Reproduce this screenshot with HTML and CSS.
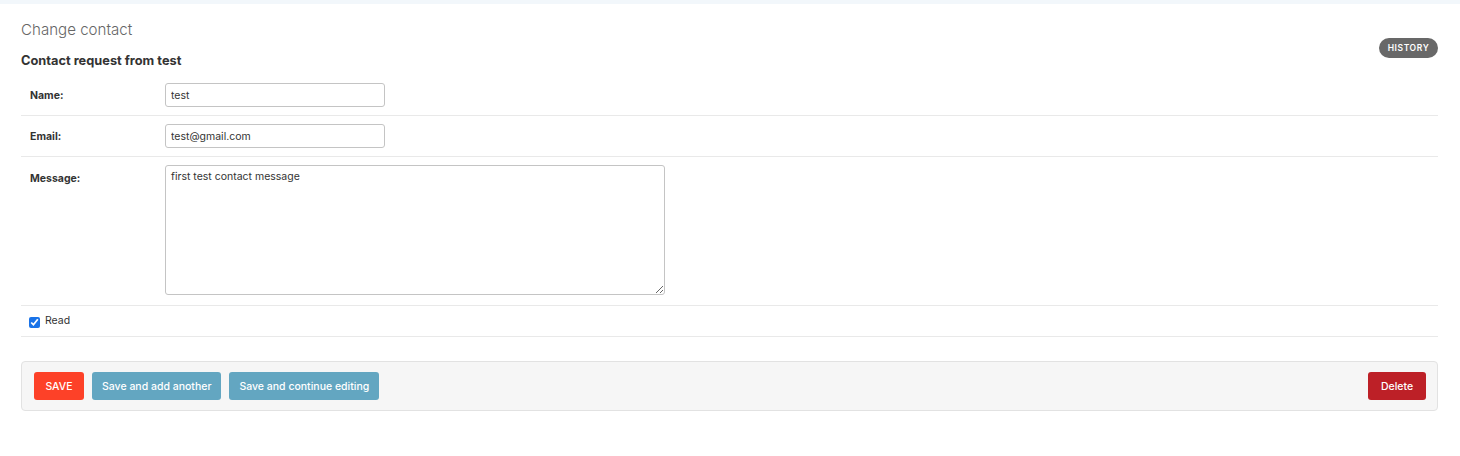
FILE: index.html
```html
<!DOCTYPE html>
<html lang="en">
<head>
<meta charset="utf-8">
<title>Change contact</title>
<link rel="stylesheet" href="styles.css">
</head>
<body>
<div class="topstrip"></div>
<div class="content">
  <div class="header">
    <div class="titles">
      <h1 class="page-title">Change contact</h1>
      <h2 class="object-title">Contact request from test</h2>
    </div>
    <a class="history-link" href="#">History</a>
  </div>
  <form class="change-form">
    <div class="form-row">
      <label class="field-label" for="id_name">Name:</label>
      <input class="text-input" id="id_name" type="text" value="test">
    </div>
    <div class="form-row">
      <label class="field-label" for="id_email">Email:</label>
      <input class="text-input" id="id_email" type="text" value="test@gmail.com">
    </div>
    <div class="form-row">
      <label class="field-label label-top" for="id_message">Message:</label>
      <textarea class="text-area" id="id_message">first test contact message</textarea>
    </div>
    <div class="form-row checkbox-row">
      <input class="check" id="id_read" type="checkbox" checked>
      <label class="check-label" for="id_read">Read</label>
    </div>
    <div class="submit-row">
      <div class="submit-left">
        <button type="button" class="btn btn-save">SAVE</button>
        <button type="button" class="btn btn-alt">Save and add another</button>
        <button type="button" class="btn btn-alt">Save and continue editing</button>
      </div>
      <button type="button" class="btn btn-delete">Delete</button>
    </div>
  </form>
</div>
</body>
</html>
```
FILE: styles.css
```css
html, body {
  margin: 0;
  padding: 0;
  background: #fff;
  font-family: "Inter", "Noto Sans", sans-serif;
  color: #333;
}
.topstrip {
  height: 4px;
  background: #f2f7fb;
}
.content {
  padding: 15px 22px 0 21px;
}
.header {
  display: flex;
  justify-content: space-between;
  align-items: flex-start;
}
.page-title {
  margin: 0;
  font-size: 15.1px;
  line-height: 22px;
  font-weight: 300;
  color: #666;
}
.object-title {
  margin: 12px 0 0 0;
  font-size: 12.8px;
  line-height: 16px;
  font-weight: 700;
  color: #333;
}
.history-link {
  margin-top: 19px;
  display: inline-flex;
  align-items: center;
  justify-content: center;
  width: 59px;
  height: 20px;
  border-radius: 10px;
  background: #686868;
  color: #fff;
  font-size: 8.5px;
  font-weight: 600;
  letter-spacing: 0.6px;
  text-transform: uppercase;
  text-decoration: none;
}
.change-form {
  margin-top: 6px;
}
.form-row {
  display: flex;
  align-items: flex-start;
  padding: 8px 9px;
  border-bottom: 1px solid #e9e9e9;
}
.field-label {
  width: 135px;
  height: 24px;
  flex: none;
  font-size: 10.5px;
  font-weight: 700;
  color: #333;
  line-height: 26px;
}
.label-top {
  line-height: 14px;
  padding-top: 7px;
}
.text-input {
  box-sizing: border-box;
  width: 220px;
  height: 24px;
  margin: 0;
  padding: 0 5px;
  border: 1px solid #c4c4c4;
  border-radius: 3px;
  font-family: inherit;
  font-size: 10.5px;
  color: #333;
}
.text-area {
  box-sizing: border-box;
  display: block;
  width: 500px;
  height: 130px;
  margin: 0 0 2px 0;
  padding: 4px 5px;
  border: 1px solid #c4c4c4;
  border-radius: 3px;
  font-family: inherit;
  font-size: 10.5px;
  line-height: 14px;
  color: #333;
}
.checkbox-row {
  align-items: center;
  padding: 9px 8px 8px 8px;
  height: 13px;
}
.check {
  width: 11px;
  height: 11px;
  margin: 2px 5px 0 0;
  accent-color: #1a73e8;
}
.check-label {
  font-size: 10.5px;
  color: #333;
  margin-top: -3px;
}
.submit-row {
  margin-top: 24px;
  display: flex;
  justify-content: space-between;
  align-items: center;
  padding: 10px 11px 10px 12px;
  background: #f6f6f6;
  border: 1px solid #e2e2e2;
  border-radius: 4px;
}
.submit-left {
  display: flex;
  gap: 8px;
}
.btn {
  height: 28px;
  border: none;
  border-radius: 3px;
  padding: 0 10px;
  font-family: inherit;
  font-size: 10.5px;
  font-weight: 500;
  color: #fff;
  cursor: pointer;
}
.btn-save {
  background: #fd4128;
  width: 50px;
  padding: 0;
}
.btn-alt {
  background: #63a6c1;
}
.btn-delete {
  background: #bd2027;
  width: 58px;
  padding: 0;
}
```
